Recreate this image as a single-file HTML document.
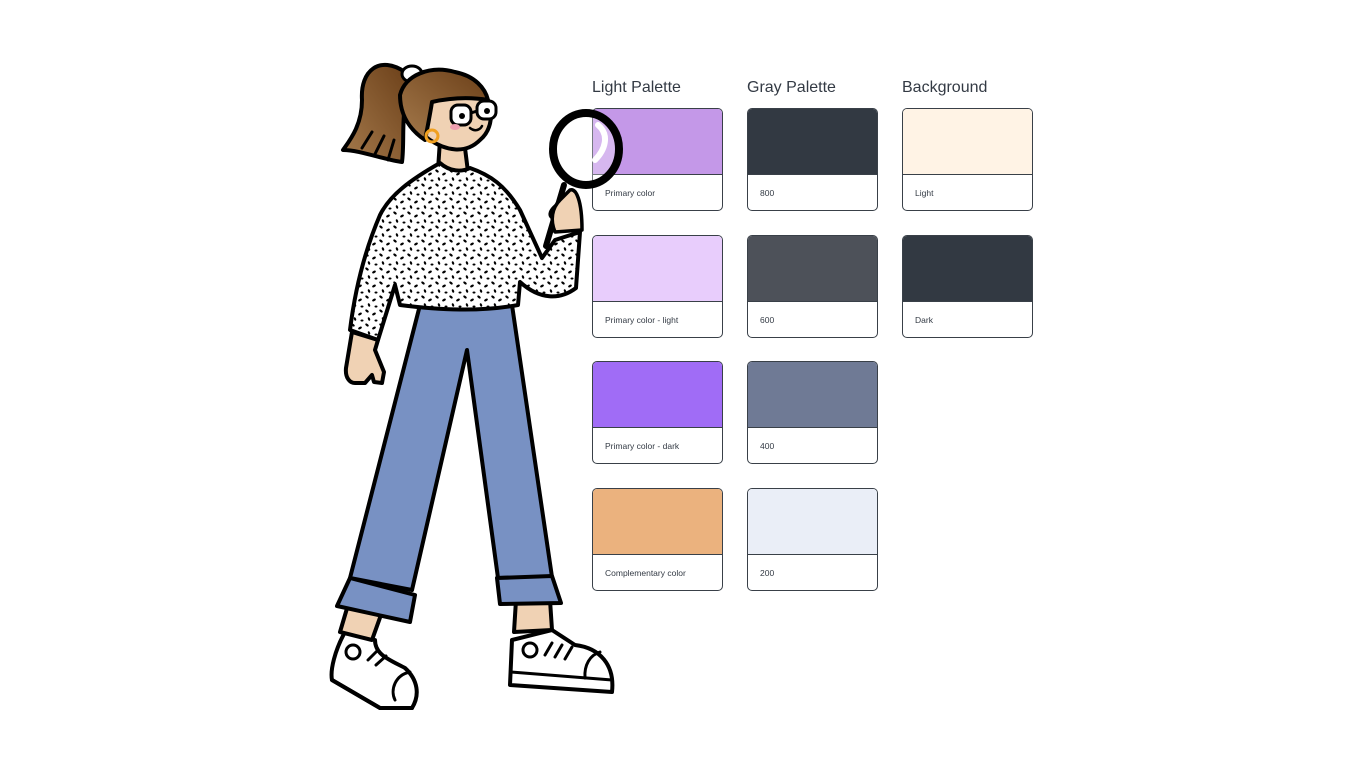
<!DOCTYPE html>
<html><head><meta charset="utf-8"><style>
html,body{margin:0;padding:0;background:#fff;width:1366px;height:768px;overflow:hidden;font-family:"Liberation Sans",sans-serif;}
.t{position:absolute;top:79px;font-size:16px;color:#333a44;}
.c{position:absolute;width:129px;height:101px;border:1.8px solid #394048;border-radius:5px;background:#fff;overflow:hidden;box-sizing:content-box}
.c .s{height:65px;border-bottom:1.2px solid #394048}
.c .l{font-size:8.5px;color:#333a44;padding:13px 0 0 12px}
svg{position:absolute;left:0;top:0}
</style></head><body>
<div class="t" style="left:592px">Light Palette</div>
<div class="t" style="left:747px">Gray Palette</div>
<div class="t" style="left:902px">Background</div>

<div class="c" style="left:592px;top:108px"><div class="s" style="background:#c498e8"></div><div class="l">Primary color</div></div>
<div class="c" style="left:592px;top:235px"><div class="s" style="background:#e8cdfc"></div><div class="l">Primary color - light</div></div>
<div class="c" style="left:592px;top:361px"><div class="s" style="background:#a06cf6"></div><div class="l">Primary color - dark</div></div>
<div class="c" style="left:592px;top:488px"><div class="s" style="background:#ebb27e"></div><div class="l">Complementary color</div></div>

<div class="c" style="left:747px;top:108px"><div class="s" style="background:#323942"></div><div class="l">800</div></div>
<div class="c" style="left:747px;top:235px"><div class="s" style="background:#4d5159"></div><div class="l">600</div></div>
<div class="c" style="left:747px;top:361px"><div class="s" style="background:#6f7a95"></div><div class="l">400</div></div>
<div class="c" style="left:747px;top:488px"><div class="s" style="background:#eaeef7"></div><div class="l">200</div></div>

<div class="c" style="left:902px;top:108px"><div class="s" style="background:#fff3e5"></div><div class="l">Light</div></div>
<div class="c" style="left:902px;top:235px"><div class="s" style="background:#323942"></div><div class="l">Dark</div></div>

<svg width="1366" height="768" viewBox="0 0 1366 768">
<defs>
<pattern id="dots" width="14" height="14" patternUnits="userSpaceOnUse">
<rect width="14" height="14" fill="#fff"/>
<ellipse cx="3" cy="3" rx="2" ry="1.1" transform="rotate(40 3 3)" fill="#000"/>
<ellipse cx="10" cy="6" rx="2" ry="1.1" transform="rotate(-30 10 6)" fill="#000"/>
<ellipse cx="5" cy="11" rx="1.8" ry="1.1" transform="rotate(70 5 11)" fill="#000"/>
<ellipse cx="12" cy="12.5" rx="1.5" ry="1" fill="#000"/>
</pattern>
<linearGradient id="hair" x1="0" y1="1" x2="1" y2="0"><stop offset="0" stop-color="#a57a4c"/><stop offset="1" stop-color="#6b3f18"/></linearGradient>
</defs>
<g stroke="#000" stroke-width="4" stroke-linejoin="round" stroke-linecap="round">
<!-- ponytail -->
<path d="M405 72 C380 55 360 70 362 100 C362 125 350 140 343 150 C360 150 385 160 402 162 C405 140 400 110 410 90 Z" fill="url(#hair)"/>
<path d="M362 148 L372 132 M374 156 L384 136 M388 160 L394 140" fill="none" stroke-width="3"/>
<ellipse cx="412" cy="74" rx="10" ry="8" fill="#fff" stroke-width="3"/>
<!-- shoes -->
<path d="M345 632 C335 650 330 670 332 680 L380 708 L412 708 C420 695 418 680 405 668 C390 660 375 655 375 640 Z" fill="#fff"/>
<path d="M332 680 L380 708 L412 708" fill="none"/>
<path d="M395 700 C390 690 395 675 410 672" fill="none" stroke-width="3"/>
<path d="M368 660 L378 650 M376 665 L386 656" fill="none" stroke-width="3"/>
<path d="M512 640 L510 685 L612 692 C615 665 600 648 575 645 L552 630 Z" fill="#fff"/>
<path d="M511 672 L612 680" fill="none" stroke-width="3"/>
<path d="M585 678 C584 665 590 655 600 652" fill="none" stroke-width="3"/>
<path d="M545 655 L552 643 M555 657 L562 645 M565 659 L572 647" fill="none" stroke-width="3"/>
<circle cx="353" cy="652" r="7" fill="none" stroke-width="3"/>
<circle cx="530" cy="650" r="7" fill="none" stroke-width="3"/>
<!-- ankles -->
<path d="M348 605 L340 632 L372 640 L382 612 Z" fill="#f0d2b4"/>
<path d="M516 600 L514 632 L552 630 L550 600 Z" fill="#f0d2b4"/>
<!-- pants -->
<path d="M420 305 L512 305 L552 577 L498 578 L467 350 L412 590 L350 578 Z" fill="#7891c3"/>
<path d="M350 578 L415 595 L410 622 L337 606 Z" fill="#7891c3"/>
<path d="M497 578 L552 576 L561 603 L500 604 Z" fill="#7891c3"/>
<!-- left hand -->
<path d="M352 332 L346 368 C345 378 350 383 355 383 L365 383 L372 375 L374 382 L382 383 L384 372 L375 350 L378 340 Z" fill="#f0d2b4"/>
<!-- neck -->
<path d="M440 140 L438 170 L468 172 L464 140 Z" fill="#f0d2b4"/>
<!-- sweater -->
<path d="M440 163 C450 172 462 172 470 168 C490 175 505 185 520 210 L542 258 L555 240 L580 232 L576 288 C560 300 540 300 520 282 L518 305 C480 312 440 310 400 305 L395 285 L378 340 L350 330 C355 290 365 250 380 215 C390 195 410 180 440 163 Z" fill="url(#dots)"/>
<!-- face -->
<path d="M412 85 C430 72 470 78 485 95 C495 110 492 130 480 140 C465 155 445 150 430 140 C415 130 405 105 412 85 Z" fill="#f0d2b4"/>
<path d="M400 95 C405 75 430 65 455 72 C475 76 485 88 488 100 C470 97 450 98 432 102 C430 115 428 125 425 140 C410 130 400 115 400 95 Z" fill="url(#hair)"/>
<rect x="451" y="105" width="20" height="20" rx="7" fill="#fff" stroke-width="3"/>
<rect x="477" y="101" width="19" height="18" rx="7" fill="#fff" stroke-width="3"/>
<circle cx="462" cy="116" r="3" fill="#000" stroke="none"/>
<circle cx="487" cy="111" r="3" fill="#000" stroke="none"/>
<path d="M471 113 L477 111" stroke-width="3"/>
<path d="M470 128 C475 132 480 130 482 126" fill="none" stroke-width="2.5"/>
<circle cx="432" cy="136" r="6" fill="none" stroke="#f0a020" stroke-width="3"/>
<ellipse cx="455" cy="127" rx="5" ry="3" fill="#f0a0b0" stroke="none"/>
<!-- magnifier -->
<path d="M564 185 L546 246" stroke-width="6"/>
<ellipse cx="586" cy="149" rx="33" ry="36" fill="rgba(255,255,255,0.3)" stroke-width="8"/>
<path d="M598 125 C610 135 605 150 595 160" fill="none" stroke="#fff" stroke-width="6"/>
<!-- right hand over handle -->
<path d="M555 232 C550 220 552 208 560 200 L570 190 C576 188 582 200 582 230 Z" fill="#f0d2b4" stroke-width="3.5"/>
<path d="M556 205 C550 210 548 215 552 218" fill="none" stroke-width="3"/>
</g>
</svg>
</body></html>
